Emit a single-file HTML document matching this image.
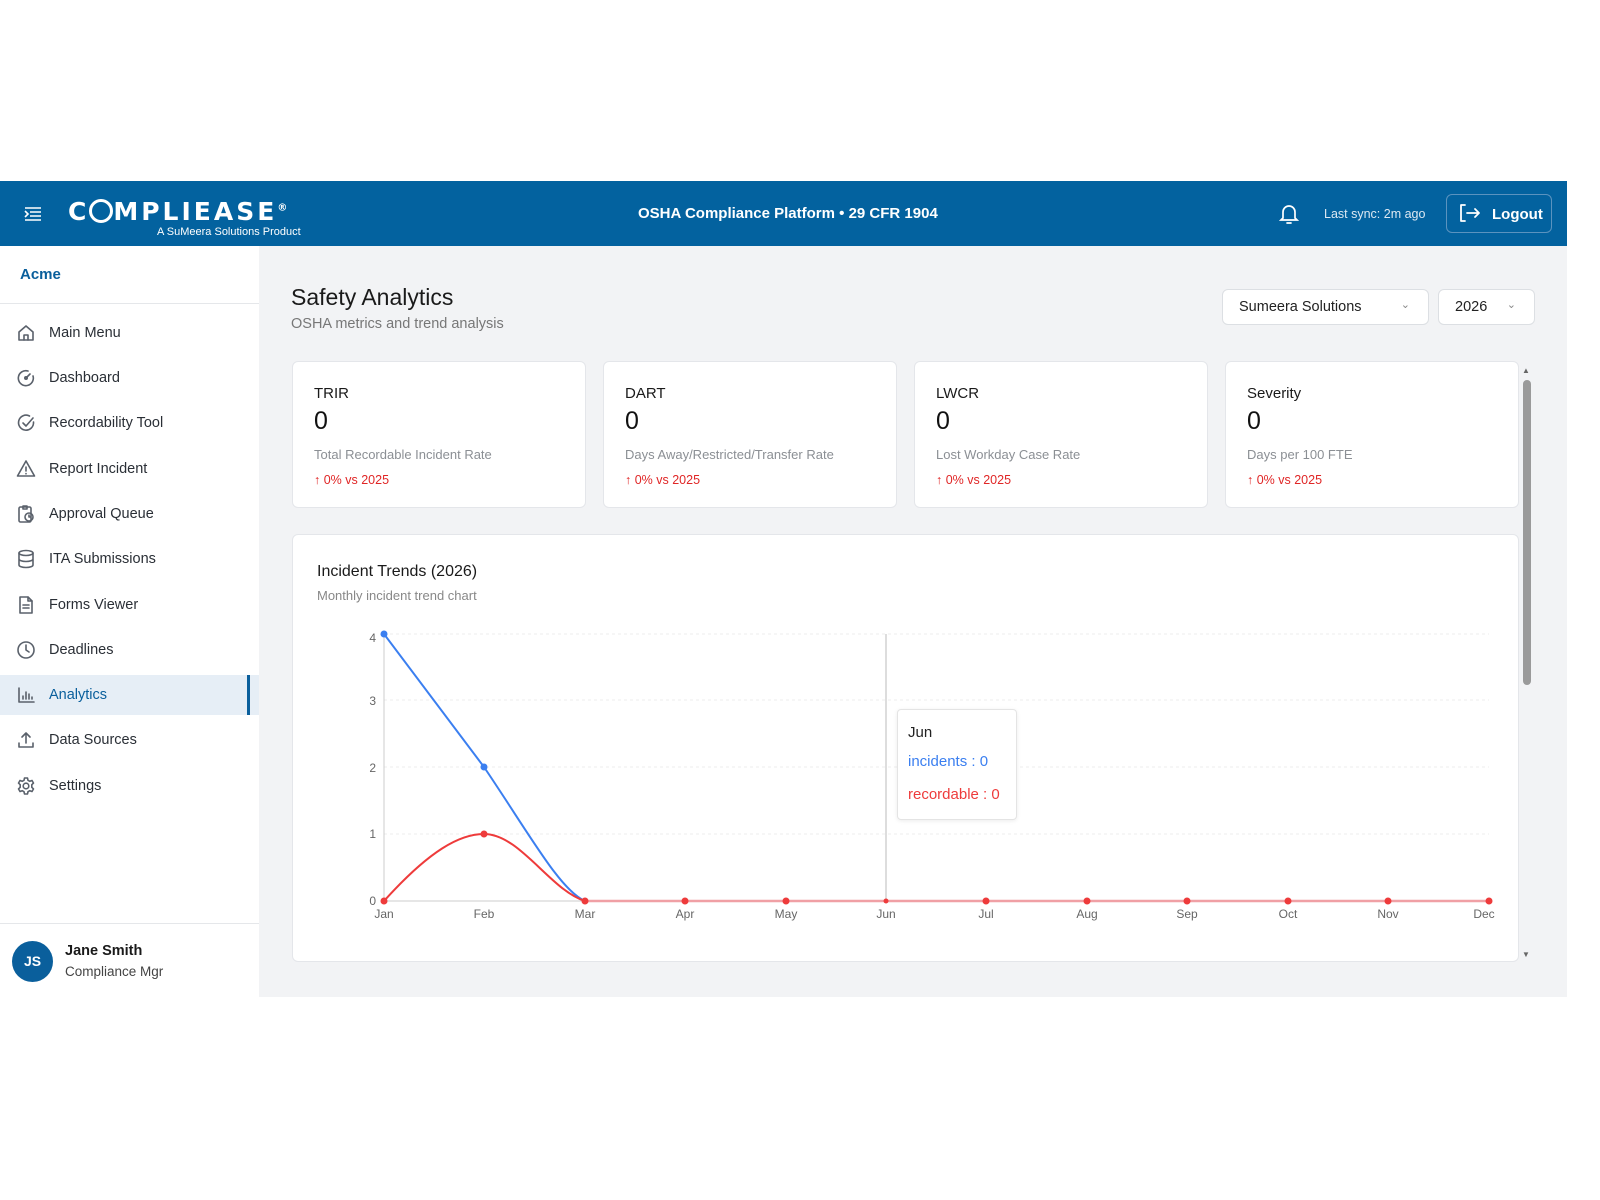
<!DOCTYPE html>
<html><head><meta charset="utf-8"><style>
*{margin:0;padding:0;box-sizing:border-box}
body{width:1600px;height:1200px;background:#fff;font-family:"Liberation Sans",sans-serif;position:relative;overflow:hidden}
.a{position:absolute}
.hdr{left:0;top:181px;width:1567px;height:65px;background:#03629f}
.side{left:0;top:246px;width:259px;height:751px;background:#fff}
.main{left:259px;top:246px;width:1308px;height:751px;background:#f2f3f5}
.nav{position:absolute;left:0;width:259px;height:40px;font-size:14.5px;color:#2a2f36;display:flex;align-items:center}
.nav svg{position:absolute;left:16px;width:20px;height:20px;fill:none;stroke:#5a616b;stroke-width:1.6;stroke-linecap:round;stroke-linejoin:round}
.nav span{position:absolute;left:49px}
.card{background:#fff;border:1px solid #e4e6ea;border-radius:6px}
.ct{font-size:15px;color:#1a1a1a;position:absolute;left:21px;top:23px}
.cv{font-size:25px;color:#111;position:absolute;left:21px;top:45px}
.cd{font-size:13px;color:#8b8f94;position:absolute;left:21px;top:85px}
.cc{font-size:12.5px;color:#e02626;position:absolute;left:21px;top:111px}
.ax{font-size:12px;fill:#666;font-family:"Liberation Sans",sans-serif}
</style></head><body>
<div class="a hdr">
 <svg class="a" style="left:24px;top:26px" width="18" height="14" viewBox="0 0 18 14" fill="none" stroke="#fff" stroke-width="1.6"><path d="M1 1h16M6 5h11M6 9h11M1 13h16M1 4l3 3-3 3"/></svg>
 <div class="a" style="left:68px;top:16px;color:#fff;font-size:25px;font-weight:bold;letter-spacing:3px;font-family:'DejaVu Sans',sans-serif">C<span style="display:inline-block;width:24px;height:24px;border:3px solid #fff;border-radius:50%;vertical-align:-3px"></span>MPLIEASE<sup style="font-size:10px;letter-spacing:0">®</sup></div>
 <div class="a" style="left:157px;top:45px;color:#fff;font-size:11px">A SuMeera Solutions Product</div>
 <div class="a" style="left:638px;top:24px;color:#fff;font-size:15px;font-weight:bold">OSHA Compliance Platform • 29 CFR 1904</div>
 <svg class="a" style="left:1279px;top:22px" width="20" height="22" viewBox="0 0 20 22" fill="none" stroke="#fff" stroke-width="1.7" stroke-linecap="round"><path d="M4 15V9a6 6 0 0 1 12 0v6l2 2H2z"/><path d="M8 20h4"/></svg>
 <div class="a" style="left:1324px;top:26px;color:#dce8f2;font-size:12.5px">Last sync: 2m ago</div>
 <div class="a" style="left:1446px;top:13px;width:106px;height:39px;border:1px solid #5b93bf;border-radius:6px"></div>
 <svg class="a" style="left:1459px;top:23px" width="22" height="18" viewBox="0 0 22 18" fill="none" stroke="#fff" stroke-width="1.8" stroke-linecap="round" stroke-linejoin="round"><path d="M6 1H2v16h4M8 9h12M16 5l4 4-4 4"/></svg>
 <div class="a" style="left:1492px;top:25px;color:#fff;font-size:15px;font-weight:bold">Logout</div>
</div>
<div class="a side">
 <div class="a" style="left:20px;top:20px;color:#0a5f9c;font-size:15px;font-weight:bold">Acme</div>
 <div class="a" style="left:0;top:57px;width:259px;height:1px;background:#e5e7ea"></div>
 <div class="nav" style="top:67px"><svg viewBox="0 0 20 20"><path d="M3 9l7-6 7 6v8H3z"/><path d="M8 17v-5h4v5"/></svg><span>Main Menu</span></div>
 <div class="nav" style="top:112px"><svg viewBox="0 0 20 20"><path d="M17 8a7.5 7.5 0 1 1-5-5"/><circle cx="10" cy="10" r="1.2"/><path d="M10 10l4-4"/></svg><span>Dashboard</span></div>
 <div class="nav" style="top:157px"><svg viewBox="0 0 20 20"><path d="M17.5 9a7.5 7.5 0 1 1-4-6"/><path d="M7 10l3 3 7-8"/></svg><span>Recordability Tool</span></div>
 <div class="nav" style="top:203px"><svg viewBox="0 0 20 20"><path d="M10 2l8.5 15h-17z"/><path d="M10 8v4M10 14.5v.3"/></svg><span>Report Incident</span></div>
 <div class="nav" style="top:248px"><svg viewBox="0 0 20 20"><rect x="3" y="3" width="12" height="15" rx="1.5"/><path d="M7 2h4v3H7z"/><circle cx="13" cy="13" r="4"/><path d="M13 11v2h1.5"/></svg><span>Approval Queue</span></div>
 <div class="nav" style="top:293px"><svg viewBox="0 0 20 20"><ellipse cx="10" cy="4" rx="7" ry="2.5"/><path d="M3 4v12c0 1.4 3 2.5 7 2.5s7-1.1 7-2.5V4M3 10c0 1.4 3 2.5 7 2.5s7-1.1 7-2.5"/></svg><span>ITA Submissions</span></div>
 <div class="nav" style="top:339px"><svg viewBox="0 0 20 20"><path d="M4 2h8l4 4v12H4z"/><path d="M12 2v4h4M7 10h6M7 13h6"/></svg><span>Forms Viewer</span></div>
 <div class="nav" style="top:384px"><svg viewBox="0 0 20 20"><circle cx="10" cy="10" r="8"/><path d="M10 5v5l3 2"/></svg><span>Deadlines</span></div>
 <div class="nav" style="top:429px;background:#e6eef6;color:#0a5f9c"><svg viewBox="0 0 20 20"><path d="M3 3v14h15M7 14v-3M10 14V7M13 14v-5M16 14v-2"/></svg><span>Analytics</span><div class="a" style="left:247px;top:0;width:3px;height:40px;background:#0a5f9c"></div></div>
 <div class="nav" style="top:474px"><svg viewBox="0 0 20 20"><path d="M3 13v4h14v-4M10 13V3M6 7l4-4 4 4"/></svg><span>Data Sources</span></div>
 <div class="nav" style="top:520px"><svg viewBox="0 0 20 20"><circle cx="10" cy="10" r="2.8"/><path d="M8.5 2h3l.5 2.3 1.8 1 2.2-.8 1.5 2.6-1.7 1.6v2.6l1.7 1.6-1.5 2.6-2.2-.8-1.8 1-.5 2.3h-3L8 15.7l-1.8-1-2.2.8-1.5-2.6 1.7-1.6V8.7L2.5 7.1 4 4.5l2.2.8 1.8-1z"/></svg><span>Settings</span></div>
 <div class="a" style="left:0;top:677px;width:259px;height:1px;background:#e5e7ea"></div>
 <div class="a" style="left:12px;top:695px;width:41px;height:41px;border-radius:50%;background:#0a5f9c;color:#fff;font-size:14px;font-weight:bold;text-align:center;line-height:41px">JS</div>
 <div class="a" style="left:65px;top:697px;font-size:14.5px;font-weight:bold;color:#1a1a1a">Jane Smith</div>
 <div class="a" style="left:65px;top:718px;font-size:13.5px;color:#444">Compliance Mgr</div>
</div>
<div class="a main">
 <div class="a" style="left:32px;top:38px;font-size:23px;color:#1a1a1a">Safety Analytics</div>
 <div class="a" style="left:32px;top:70px;font-size:14.5px;color:#777">OSHA metrics and trend analysis</div>
 <div class="a" style="left:963px;top:43px;width:207px;height:36px;background:#fff;border:1px solid #dcdfe3;border-radius:6px;font-size:14.5px;color:#222;padding:9px 16px">Sumeera Solutions<span style="position:absolute;right:18px;top:8px;color:#888;font-size:11px">&#8964;</span></div>
 <div class="a" style="left:1179px;top:43px;width:97px;height:36px;background:#fff;border:1px solid #dcdfe3;border-radius:6px;font-size:14.5px;color:#222;padding:9px 16px">2026<span style="position:absolute;right:18px;top:8px;color:#888;font-size:11px">&#8964;</span></div>
 <div class="a card" style="left:33px;top:115px;width:294px;height:147px"><div class="ct">TRIR</div><div class="cv">0</div><div class="cd">Total Recordable Incident Rate</div><div class="cc">↑ 0% vs 2025</div></div>
 <div class="a card" style="left:344px;top:115px;width:294px;height:147px"><div class="ct">DART</div><div class="cv">0</div><div class="cd">Days Away/Restricted/Transfer Rate</div><div class="cc">↑ 0% vs 2025</div></div>
 <div class="a card" style="left:655px;top:115px;width:294px;height:147px"><div class="ct">LWCR</div><div class="cv">0</div><div class="cd">Lost Workday Case Rate</div><div class="cc">↑ 0% vs 2025</div></div>
 <div class="a card" style="left:966px;top:115px;width:294px;height:147px"><div class="ct">Severity</div><div class="cv">0</div><div class="cd">Days per 100 FTE</div><div class="cc">↑ 0% vs 2025</div></div>
 <div class="a card" style="left:33px;top:288px;width:1227px;height:428px"><div class="a" style="left:24px;top:28px;font-size:16px;color:#1a1a1a">Incident Trends (2026)</div><div class="a" style="left:24px;top:53px;font-size:13px;color:#888">Monthly incident trend chart</div></div>
 <div class="a" style="left:1263px;top:114px;width:11px;height:600px"><div style="position:absolute;left:0;top:6px;font-size:8px;color:#666">▲</div><div style="position:absolute;left:1px;top:20px;width:8px;height:305px;background:#9a9a9a;border-radius:4px"></div><div style="position:absolute;left:0;top:590px;font-size:8px;color:#666">▼</div></div>
</div>
<svg class="a" style="left:0;top:0" width="1600" height="1200">
 <g stroke="#ececec" stroke-dasharray="3 3"><path d="M384 634H1489M384 700H1489M384 767H1489M384 834H1489"/></g>
 <path d="M384 634V901" stroke="#ccc"/>
 <path d="M886 634V901" stroke="#bbb"/>
 <path d="M384 901H1489" stroke="#ccc"/>
 <g class="ax" text-anchor="end"><text x="376" y="642">4</text><text x="376" y="705">3</text><text x="376" y="772">2</text><text x="376" y="838">1</text><text x="376" y="905">0</text></g>
 <g class="ax" text-anchor="middle"><text x="384" y="918">Jan</text><text x="484" y="918">Feb</text><text x="585" y="918">Mar</text><text x="685" y="918">Apr</text><text x="786" y="918">May</text><text x="886" y="918">Jun</text><text x="986" y="918">Jul</text><text x="1087" y="918">Aug</text><text x="1187" y="918">Sep</text><text x="1288" y="918">Oct</text><text x="1388" y="918">Nov</text><text x="1484" y="918">Dec</text></g>
 <path d="M384 634L484 767C530 835 560 890 585 901H1489" fill="none" stroke="#3b7ff0" stroke-width="2"/>
 <path d="M384 901C430 850 460 834 484 834C520 834 550 890 585 901H1489" fill="none" stroke="#ee3b3b" stroke-width="2"/>
 <path d="M585 901H1489" stroke="#f0a0a5" stroke-width="2.5"/>
 <g fill="#3b7ff0"><circle cx="384" cy="634" r="3.5"/><circle cx="484" cy="767" r="3.5"/></g>
 <g fill="#ee3b3b"><circle cx="384" cy="901" r="3.5"/><circle cx="484" cy="834" r="3.5"/><circle cx="585" cy="901" r="3.5"/><circle cx="685" cy="901" r="3.5"/><circle cx="786" cy="901" r="3.5"/><circle cx="886" cy="901" r="2.5"/><circle cx="986" cy="901" r="3.5"/><circle cx="1087" cy="901" r="3.5"/><circle cx="1187" cy="901" r="3.5"/><circle cx="1288" cy="901" r="3.5"/><circle cx="1388" cy="901" r="3.5"/><circle cx="1489" cy="901" r="3.5"/></g>
</svg>
<div class="a" style="left:897px;top:709px;width:120px;height:111px;background:#fff;border:1px solid #e4e4e4;border-radius:4px;box-shadow:0 1px 4px rgba(0,0,0,.08)">
 <div class="a" style="left:10px;top:14px;font-size:15px;color:#222">Jun</div>
 <div class="a" style="left:10px;top:43px;font-size:15px;color:#3b7ff0">incidents : 0</div>
 <div class="a" style="left:10px;top:76px;font-size:15px;color:#ee3b3b">recordable : 0</div>
</div>
</body></html>
